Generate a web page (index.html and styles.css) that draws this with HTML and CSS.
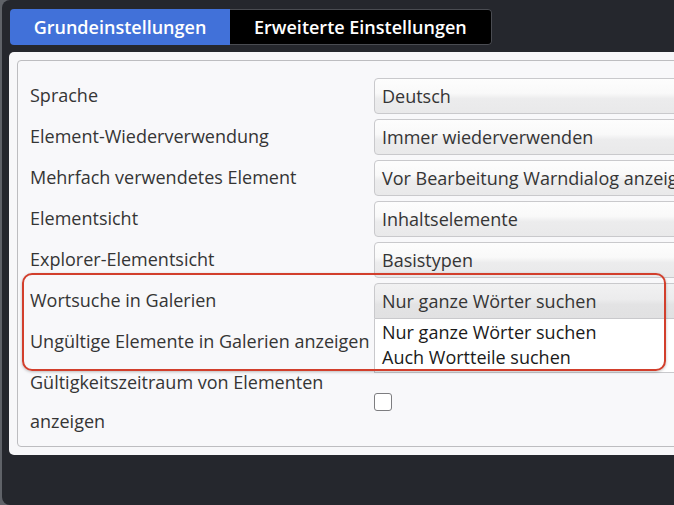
FILE: index.html
```html
<!DOCTYPE html>
<html lang="de">
<head>
  <meta charset="UTF-8" />
  <meta name="viewport" content="width=device-width, initial-scale=1" />
  <title>Einstellungen</title>
  <link rel="stylesheet" href="styles.css">
</head>
<body>

  <div class="window">
    <div class="tabs">
      <button class="tab active">Grundeinstellungen</button>
      <button class="tab">Erweiterte Einstellungen</button>
    </div>

    <div class="panel">
      <div class="settings">
        <div class="row">
          <label>Sprache</label>
          <div class="select">Deutsch</div>
        </div>
        <div class="row">
          <label>Element-Wiederverwendung</label>
          <div class="select">Immer wiederverwenden</div>
        </div>
        <div class="row">
          <label>Mehrfach verwendetes Element</label>
          <div class="select">Vor Bearbeitung Warndialog anzeigen</div>
        </div>
        <div class="row">
          <label>Elementsicht</label>
          <div class="select">Inhaltselemente</div>
        </div>
        <div class="row">
          <label>Explorer-Elementsicht</label>
          <div class="select">Basistypen</div>
        </div>
        <div class="row">
          <label>Wortsuche in Galerien</label>
          <div class="select-wrap">
            <div class="select open">Nur ganze Wörter suchen</div>
            <ul class="options">
              <li>Nur ganze Wörter suchen</li>
              <li>Auch Wortteile suchen</li>
            </ul>
          </div>
        </div>
        <div class="row">
          <label>Ungültige Elemente in Galerien anzeigen</label>
          <span class="checkbox"></span>
        </div>
        <div class="row">
          <label class="wrap">Gültigkeitszeitraum von Elementen anzeigen</label>
          <span class="checkbox"></span>
        </div>
      </div>
    </div>

    <!-- annotation around the opened dropdown -->
    <div class="highlight"></div>
  </div>

</body>
</html>
```

FILE: styles.css
```css
html, body {
  margin: 0;
  padding: 0;
  height: 100%;
}

body {
  font-family: 'Open Sans', sans-serif;
  background: #5f6268;
  overflow: hidden;
}

.window {
  position: relative;
  margin-left: 2px;
  width: 900px;
  height: 505px;
  padding-top: 9px;
  box-sizing: border-box;
  background: #25272d;
  border-radius: 8px 0 0 8px;
}

.tabs {
  display: inline-flex;
  margin-left: 8px;
  border-radius: 4px;
  overflow: hidden;
}

.tab {
  height: 36px;
  padding: 0 24px;
  border: 1px solid #4a4c52;
  border-left: none;
  background: #000;
  color: #fff;
  font-family: 'Open Sans', sans-serif;
  font-size: 18px;
  font-weight: 600;
  border-radius: 0 4px 4px 0;
  white-space: nowrap;
  cursor: pointer;
}

.tab.active {
  background: #4171d9;
  border: none;
  border-radius: 0;
  width: 220px;
  padding: 0;
}

.panel {
  margin: 7px 0 0 7px;
  padding: 8px;
  background: #f7f7f9;
  border-radius: 5px 0 0 5px;
}

.settings {
  padding: 14px 0 4px 12px;
  border: 1px solid #bdbdc0;
  border-radius: 4px;
  background: #f8f8fa;
}

.row {
  display: grid;
  grid-template-columns: 344px 1fr;
  align-items: center;
  padding: 1px 0;
}

label {
  color: #353535;
  font-size: 18px;
  line-height: 39px;
  white-space: nowrap;
}

label.wrap {
  white-space: normal;
}

.select-wrap {
  position: relative;
}

.select {
  height: 36px;
  box-sizing: border-box;
  padding: 0 7px;
  border: 1px solid #c9c9cc;
  border-radius: 4px;
  background: linear-gradient(#fdfdfd 0%, #f9f9f9 42%, #ececed 58%, #e9e9ea 100%);
  color: #353535;
  font-size: 18px;
  line-height: 34px;
  white-space: nowrap;
}

.select.open {
  border-radius: 4px 4px 0 0;
  background: linear-gradient(#f1f1f2 0%, #ececed 45%, #e3e3e4 60%, #e1e1e2 100%);
}

.options {
  position: absolute;
  top: 100%;
  left: 0;
  right: 0;
  z-index: 2;
  margin: 0;
  padding: 1px 0 2px;
  list-style: none;
  background: #fff;
  border: 1px solid #c9c9cc;
  border-top: none;
}

.options li {
  padding: 0 7px;
  color: #1a1a1a;
  font-size: 18px;
  line-height: 25px;
}

.checkbox {
  display: block;
  width: 16px;
  height: 16px;
  border: 1px solid #7d7d80;
  border-radius: 3px;
  background: #fff;
}

.highlight {
  position: absolute;
  left: 20px;
  top: 273px;
  width: 644px;
  height: 98px;
  box-sizing: border-box;
  border: 2px solid #d23f2c;
  border-radius: 10px;
  box-shadow: 0 1px 3px rgba(0, 0, 0, 0.25);
  z-index: 3;
}
```
